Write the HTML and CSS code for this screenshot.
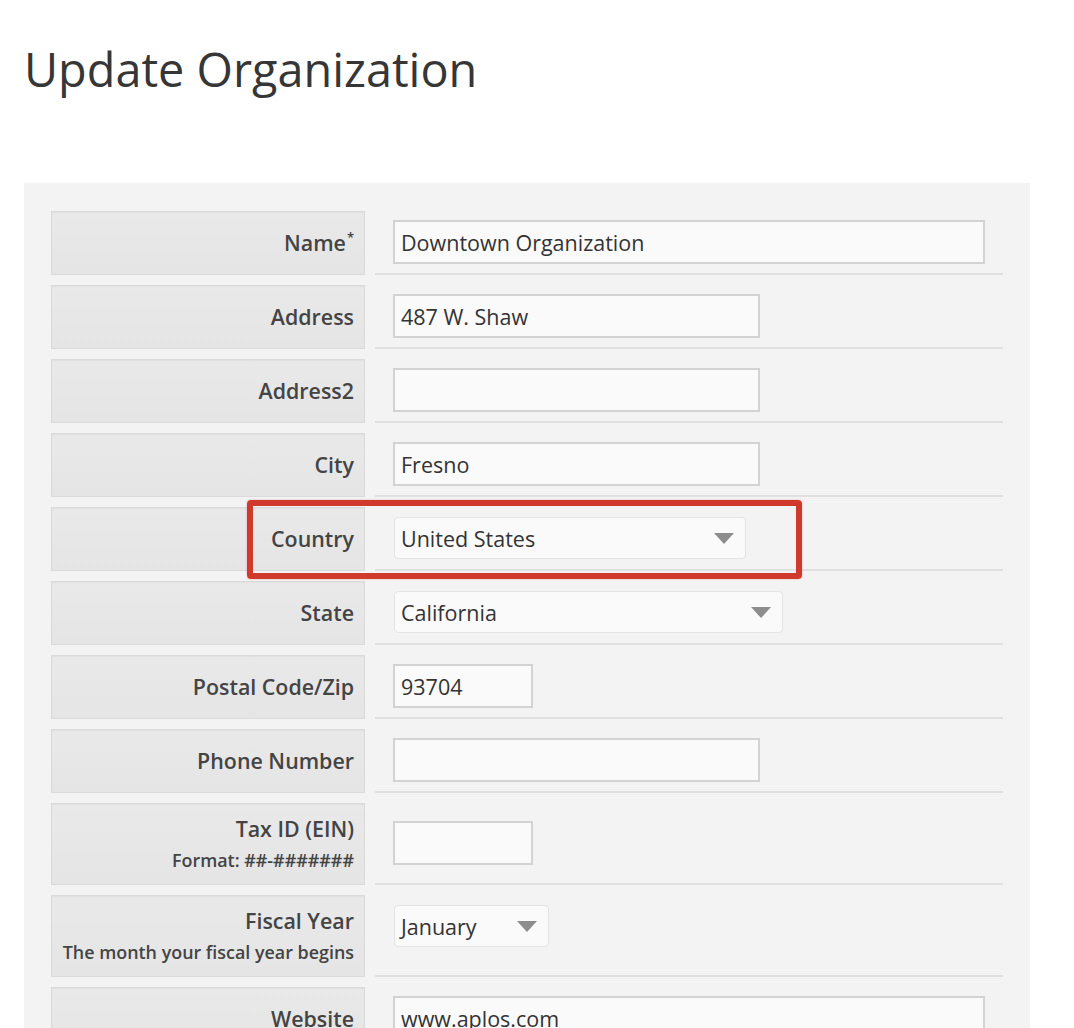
FILE: index.html
```html
<!DOCTYPE html>
<html lang="en">
<head>
    <meta charset="UTF-8">
    <meta name="viewport" content="width=device-width, initial-scale=1.0">
    <title>Update Organization</title>
    <link rel="stylesheet" href="styles.css">
</head>
<body>

<h1 class="page-title">Update Organization</h1>

<form class="org-form">
    <div class="row">
        <div class="row-label"><span class="label-main">Name<sup class="req">*</sup></span></div>
        <div class="row-field"><input class="input input-wide" type="text" value="Downtown Organization"></div>
    </div>
    <div class="row">
        <div class="row-label">Address</div>
        <div class="row-field"><input class="input input-mid" type="text" value="487 W. Shaw"></div>
    </div>
    <div class="row">
        <div class="row-label">Address2</div>
        <div class="row-field"><input class="input input-mid" type="text" value=""></div>
    </div>
    <div class="row">
        <div class="row-label">City</div>
        <div class="row-field"><input class="input input-mid" type="text" value="Fresno"></div>
    </div>
    <div class="row">
        <div class="row-label">Country</div>
        <div class="row-field">
            <div class="select select-country">
                <span>United States</span>
                <svg class="caret" width="20" height="11" viewBox="0 0 20 11"><polygon points="0,0 20,0 10,11"/></svg>
            </div>
        </div>
        <div class="highlight"></div>
    </div>
    <div class="row">
        <div class="row-label">State</div>
        <div class="row-field">
            <div class="select select-state">
                <span>California</span>
                <svg class="caret" width="20" height="11" viewBox="0 0 20 11"><polygon points="0,0 20,0 10,11"/></svg>
            </div>
        </div>
    </div>
    <div class="row">
        <div class="row-label">Postal Code/Zip</div>
        <div class="row-field"><input class="input input-short" type="text" value="93704"></div>
    </div>
    <div class="row">
        <div class="row-label">Phone Number</div>
        <div class="row-field"><input class="input input-mid" type="text" value=""></div>
    </div>
    <div class="row row-tall">
        <div class="row-label">
            <span class="label-main">Tax ID (EIN)</span>
            <span class="label-hint">Format: ##-#######</span>
        </div>
        <div class="row-field"><input class="input input-short" type="text" value=""></div>
    </div>
    <div class="row row-tall">
        <div class="row-label">
            <span class="label-main">Fiscal Year</span>
            <span class="label-hint">The month your fiscal year begins</span>
        </div>
        <div class="row-field row-field-top">
            <div class="select select-month">
                <span>January</span>
                <svg class="caret" width="20" height="11" viewBox="0 0 20 11"><polygon points="0,0 20,0 10,11"/></svg>
            </div>
        </div>
    </div>
    <div class="row">
        <div class="row-label">Website</div>
        <div class="row-field"><input class="input input-wide" type="text" value="www.aplos.com"></div>
    </div>
</form>

</body>
</html>
```

FILE: styles.css
```css
*{
    box-sizing: border-box;
}
html, body{
    height: 100%;
    overflow: hidden;
}
body{
    margin: 0;
    background: #fff;
    font-family: "Open Sans", "Noto Sans", sans-serif;
    color: #444;
}

.page-title{
    margin: 0 0 86px 24px;
    padding-top: 41px;
    font-size: 46.8px;
    line-height: 56px;
    font-weight: 400;
    color: #363636;
}

.org-form{
    margin-left: 24px;
    width: 1006px;
    padding: 28px 27px 40px;
    background: #f3f3f3;
    display: flex;
    flex-direction: column;
    gap: 10px;
}

.row{
    position: relative;
    display: grid;
    grid-template-columns: 314px 1fr;
    column-gap: 10px;
    min-height: 64px;
}
.row-tall{
    min-height: 82px;
}

.row-label{
    display: flex;
    flex-direction: column;
    justify-content: center;
    align-items: flex-end;
    padding: 0 10px 0 4px;
    background: linear-gradient(#e9e9e9, #e5e5e5);
    border: 1px solid #dadada;
    box-shadow: inset 0 1px 2px rgba(0, 0, 0, 0.04);
    font-size: 21.4px;
    font-weight: 600;
    line-height: 32px;
    color: #444;
    text-align: right;
    white-space: nowrap;
}
.req{
    font-size: 13px;
    line-height: 0;
    vertical-align: 9px;
    margin-left: 1px;
}
.label-hint{
    font-size: 17.9px;
    line-height: 30px;
}

.row-field{
    display: flex;
    align-items: center;
    padding-left: 18px;
    border-bottom: 2px solid #e0e0e0;
}
.row-field-top{
    align-items: flex-start;
    padding-top: 10px;
}

.input{
    height: 44px;
    padding: 0 6px;
    border: 2px solid #d3d3d3;
    background: #fafafa;
    font: inherit;
    font-size: 21.5px;
    color: #333;
    outline: none;
}
.input-wide{ width: 592px; }
.input-mid{ width: 367px; }
.input-short{ width: 140px; }

.select{
    display: flex;
    align-items: center;
    justify-content: space-between;
    height: 42px;
    margin-left: 1px;
    padding: 0 11px 0 6px;
    border: 1px solid #e3e3e3;
    border-radius: 4px;
    background: #fafafa;
    font-size: 21.5px;
    color: #333;
}
.select-country{ width: 352px; }
.select-state{ width: 389px; }
.select-month{ width: 155px; }
.caret{
    fill: #8d8d8d;
    flex-shrink: 0;
}

/* red callout over the country row */
.highlight{
    position: absolute;
    left: 196px;
    top: -7px;
    width: 555px;
    height: 79px;
    border: 6px solid #cf3a2d;
    border-radius: 4px;
    box-shadow: 0 0 2px rgba(160, 30, 20, 0.35);
    pointer-events: none;
}
```
